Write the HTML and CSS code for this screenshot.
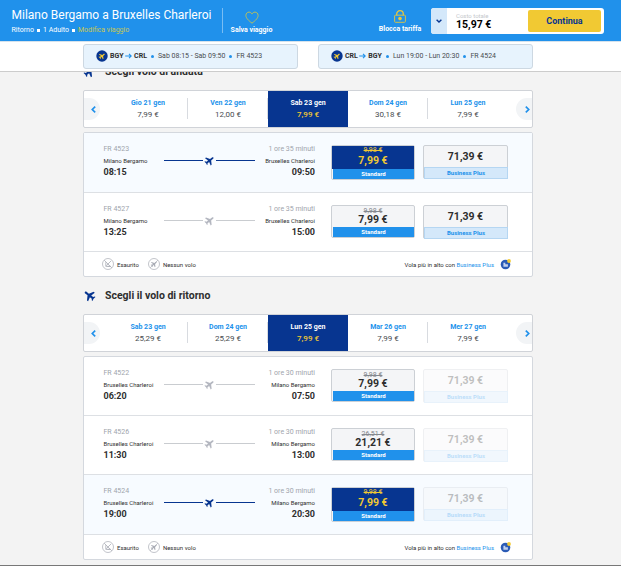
FILE: index.html
```
<!DOCTYPE html>
<html lang="it">
<head>
  <meta charset="UTF-8" />
  <meta name="viewport" content="width=device-width, initial-scale=1.0"/>
  <title>Milano Bergamo a Bruxelles Charleroi</title>
  <link rel="stylesheet" href="styles.css">
</head>
<body>
  <!-- icons -->
  <svg class="sprite" width="0" height="0">
    <symbol id="plane" viewBox="0 0 24 24">
      <path transform="rotate(52 12 12)" d="M22 16.5v-2.6L14 9V3.500c0-1.200-1-2.300-2-2.300s-2 1.100-2 2.300V9l-8 4.900v2.600l8-2V19l-2.500 1.700v1.800l4.500-1 4.500 1v-1.800L14 19v-4.500z"/>
    </symbol>
    <symbol id="soldout" viewBox="0 0 12 12">
      <circle cx="6" cy="6" r="5.500" fill="none" stroke="currentColor" stroke-width=".7"/>
      <path d="M2.200 2.200l7.600 7.600M9 3L4.300 7.700M3.800 4.200v4.200h4.800M5.500 8.400l3-.1" fill="none" stroke="currentColor" stroke-width=".8"/>
    </symbol>
    <symbol id="noflight" viewBox="0 0 12 12">
      <circle cx="6" cy="6" r="5.500" fill="none" stroke="currentColor" stroke-width=".7"/>
      <path d="M2.200 9.800l7.600-7.600" fill="none" stroke="currentColor" stroke-width=".7"/>
      <use href="#plane" x="2.300" y="2.300" width="7.400" height="7.400"/>
    </symbol>
    <symbol id="bizplus" viewBox="0 0 12 12">
      <circle cx="5.500" cy="6.500" r="4.800" fill="#2b5bb5"/>
      <path d="M3.400 4.700h1.900v1.600h2.600v2.400H3.400z" fill="#c3d2ee"/>
      <circle cx="9" cy="3" r="1.900" fill="#f1c933"/>
    </symbol>
    <symbol id="badge" viewBox="0 0 12 12">
      <circle cx="6" cy="6" r="5.700" fill="#073590"/>
      <use href="#plane" x="2.200" y="2.200" width="7.600" height="7.600" fill="#f1c933"/>
    </symbol>
    <symbol id="arrow" viewBox="0 0 7 6">
      <path d="M.2 3h6M4 .8L6.200 3 4 5.200" fill="none" stroke="#2091eb" stroke-width="1.100"/>
    </symbol>
    <symbol id="left" viewBox="0 0 5 7">
      <path d="M4.200 .7L1.300 3.500 4.200 6.300" fill="none" stroke="#2091eb" stroke-width="1.700"/>
    </symbol>
    <symbol id="right" viewBox="0 0 5 7">
      <path d="M.8 .7L3.700 3.500 .8 6.300" fill="none" stroke="#2091eb" stroke-width="1.700"/>
    </symbol>
  </svg>

  <header class="header">
    <div class="topbar">
      <div class="trip">
        <h1>Milano Bergamo a Bruxelles Charleroi</h1>
        <p>Ritorno<i class="sq"></i>1 Adulto<i class="sq"></i><a href="#">Modifica viaggio</a></p>
      </div>
      <a class="action save" href="#">
        <svg width="14" height="13" viewBox="0 0 14 13"><path d="M7 12.200C3.300 9.300 .9 7.100 .9 4.400 .9 2.500 2.300 1.100 4 1.100 5.300 1.100 6.400 1.900 7 3.100 7.600 1.900 8.700 1.100 10 1.100c1.700 0 3.100 1.400 3.100 3.300C13.100 7.100 10.700 9.300 7 12.200z" fill="none" stroke="#b9bf5c" stroke-width="1"/></svg>
        Salva viaggio
      </a>
      <a class="action lock" href="#">
        <svg width="14" height="13" viewBox="0 0 14 13"><path d="M3.700 5.300V4a3.300 3.300 0 0 1 6.600 0v1.300" fill="none" stroke="#e6c63e" stroke-width="1.300"/><rect x="1.600" y="5.200" width="10.800" height="7.100" rx=".8" fill="none" stroke="#d3c24b" stroke-width="1"/><circle cx="7" cy="8.600" r="1.800" fill="#f1c933"/></svg>
        Blocca tariffa
      </a>
      <div class="total">
        <span class="toggle"><svg width="6" height="4" viewBox="0 0 6 4"><path d="M.6 .7L3 3 5.400 .7" fill="none" stroke="#073590" stroke-width="1.400"/></svg></span>
        <div class="cost">
          <small>Costo totale</small>
          <strong>15,97 €</strong>
        </div>
        <button class="continue">Continua</button>
      </div>
    </div>
    <div class="summary">
      <div class="chip">
        <svg width="12" height="12"><use href="#badge"/></svg>
        <b>BGY</b><svg class="to" width="7" height="6"><use href="#arrow"/></svg><b>CRL</b>
        <i class="dot"></i><span>Sab 08:15 - Sab 09:50</span>
        <i class="dot"></i><span>FR 4523</span>
      </div>
      <div class="chip">
        <svg width="12" height="12"><use href="#badge"/></svg>
        <b>CRL</b><svg class="to" width="7" height="6"><use href="#arrow"/></svg><b>BGY</b>
        <i class="dot"></i><span>Lun 19:00 - Lun 20:30</span>
        <i class="dot"></i><span>FR 4524</span>
      </div>
    </div>
  </header>

  <main class="page">
    <h2 class="title"><svg width="13" height="13"><use href="#plane"/></svg>Scegli volo di andata</h2>
    <div class="dates">
      <button class="nav prev"><svg width="5" height="7"><use href="#left"/></svg></button>
      <div class="date"><b>Gio 21 gen</b><span>7,99 €</span></div>
      <div class="date"><b>Ven 22 gen</b><span>12,00 €</span></div>
      <div class="date active"><b>Sab 23 gen</b><span>7,99 €</span></div>
      <div class="date"><b>Dom 24 gen</b><span>30,18 €</span></div>
      <div class="date"><b>Lun 25 gen</b><span>7,99 €</span></div>
      <button class="nav next"><svg width="5" height="7"><use href="#right"/></svg></button>
    </div>
    <div class="flights">
      <div class="flight selected">
        <div class="from"><span class="info">FR 4523</span><span class="city">Milano Bergamo</span><span class="time">08:15</span></div>
        <div class="route"><svg width="11" height="11"><use href="#plane"/></svg></div>
        <div class="dest"><span class="info">1 ore 35 minuti</span><span class="city">Bruxelles Charleroi</span><span class="time">09:50</span></div>
        <div class="fare standard"><div class="price"><s>9,98 €</s><b>7,99 €</b></div><div class="type">Standard</div></div>
        <div class="fare business"><div class="price"><b>71,39 €</b></div><div class="type">Business Plus</div></div>
      </div>
      <div class="flight">
        <div class="from"><span class="info">FR 4527</span><span class="city">Milano Bergamo</span><span class="time">13:25</span></div>
        <div class="route"><svg width="11" height="11"><use href="#plane"/></svg></div>
        <div class="dest"><span class="info">1 ore 35 minuti</span><span class="city">Bruxelles Charleroi</span><span class="time">15:00</span></div>
        <div class="fare standard"><div class="price"><s>9,98 €</s><b>7,99 €</b></div><div class="type">Standard</div></div>
        <div class="fare business"><div class="price"><b>71,39 €</b></div><div class="type">Business Plus</div></div>
      </div>
      <div class="legend">
        <svg width="12" height="12"><use href="#soldout"/></svg><span>Esaurito</span>
        <svg width="12" height="12"><use href="#noflight"/></svg><span>Nessun volo</span>
        <p>Vola più in alto con <a href="#">Business Plus</a></p>
        <svg width="12" height="12"><use href="#bizplus"/></svg>
      </div>
    </div>

    <h2 class="title return"><svg width="13" height="13"><use href="#plane"/></svg>Scegli il volo di ritorno</h2>
    <div class="dates">
      <button class="nav prev"><svg width="5" height="7"><use href="#left"/></svg></button>
      <div class="date"><b>Sab 23 gen</b><span>25,29 €</span></div>
      <div class="date"><b>Dom 24 gen</b><span>25,29 €</span></div>
      <div class="date active"><b>Lun 25 gen</b><span>7,99 €</span></div>
      <div class="date"><b>Mar 26 gen</b><span>7,99 €</span></div>
      <div class="date"><b>Mer 27 gen</b><span>7,99 €</span></div>
      <button class="nav next"><svg width="5" height="7"><use href="#right"/></svg></button>
    </div>
    <div class="flights">
      <div class="flight">
        <div class="from"><span class="info">FR 4522</span><span class="city">Bruxelles Charleroi</span><span class="time">06:20</span></div>
        <div class="route"><svg width="11" height="11"><use href="#plane"/></svg></div>
        <div class="dest"><span class="info">1 ore 30 minuti</span><span class="city">Milano Bergamo</span><span class="time">07:50</span></div>
        <div class="fare standard"><div class="price"><s>9,98 €</s><b>7,99 €</b></div><div class="type">Standard</div></div>
        <div class="fare business disabled"><div class="price"><b>71,39 €</b></div><div class="type">Business Plus</div></div>
      </div>
      <div class="flight">
        <div class="from"><span class="info">FR 4526</span><span class="city">Bruxelles Charleroi</span><span class="time">11:30</span></div>
        <div class="route"><svg width="11" height="11"><use href="#plane"/></svg></div>
        <div class="dest"><span class="info">1 ore 30 minuti</span><span class="city">Milano Bergamo</span><span class="time">13:00</span></div>
        <div class="fare standard"><div class="price"><s>26,51 €</s><b>21,21 €</b></div><div class="type">Standard</div></div>
        <div class="fare business disabled"><div class="price"><b>71,39 €</b></div><div class="type">Business Plus</div></div>
      </div>
      <div class="flight selected">
        <div class="from"><span class="info">FR 4524</span><span class="city">Bruxelles Charleroi</span><span class="time">19:00</span></div>
        <div class="route"><svg width="11" height="11"><use href="#plane"/></svg></div>
        <div class="dest"><span class="info">1 ore 30 minuti</span><span class="city">Milano Bergamo</span><span class="time">20:30</span></div>
        <div class="fare standard"><div class="price"><s>9,98 €</s><b>7,99 €</b></div><div class="type">Standard</div></div>
        <div class="fare business disabled"><div class="price"><b>71,39 €</b></div><div class="type">Business Plus</div></div>
      </div>
      <div class="legend">
        <svg width="12" height="12"><use href="#soldout"/></svg><span>Esaurito</span>
        <svg width="12" height="12"><use href="#noflight"/></svg><span>Nessun volo</span>
        <p>Vola più in alto con <a href="#">Business Plus</a></p>
        <svg width="12" height="12"><use href="#bizplus"/></svg>
      </div>
    </div>
  </main>
</body>
</html>
```
FILE: styles.css
```
* {
  box-sizing: border-box;
}
body {
  margin: 0;
  height: 566px;
  font-family: Roboto, Arial, sans-serif;
  font-size: 7px;
  color: #2e2e2e;
  background: #f3f3f3;
  border-bottom: 1px solid #777;
  overflow: hidden;
}
h1, h2, p {
  margin: 0;
}
a {
  text-decoration: none;
}
svg {
  display: block;
  flex: none;
}
button {
  border: none;
  padding: 0;
  font-family: inherit;
}
.sprite {
  position: absolute;
}

/* header */
.header {
  position: fixed;
  top: 0;
  left: 0;
  width: 100%;
  z-index: 10;
}
.topbar {
  display: flex;
  height: 42px;
  background: #2091eb;
  border-bottom: 1px solid #d5e2ec;
  color: #fff;
}
.trip {
  width: 223px;
  height: 25px;
  margin-top: 8px;
  padding-left: 11.5px;
  border-right: 1px solid #79bdf3;
}
.trip h1 {
  font-size: 12px;
  line-height: 14px;
  font-weight: 400;
  white-space: nowrap;
}
.trip p {
  display: flex;
  align-items: center;
  line-height: 9px;
  margin-top: 4px;
}
.trip a {
  color: #c9c750;
}
.sq {
  width: 3px;
  height: 3px;
  margin: 0 3px;
  background: #fff;
}
.action {
  display: flex;
  flex-direction: column;
  align-items: center;
  font-weight: 700;
  line-height: 9px;
  color: #fff;
  white-space: nowrap;
}
.save {
  width: 43px;
  margin: 11px 0 0 7px;
}
.save svg {
  margin-bottom: 2px;
}
.lock {
  width: 44px;
  margin: 10px 0 0 105px;
}
.lock svg {
  margin-bottom: 2px;
}
.total {
  display: flex;
  width: 173px;
  height: 26px;
  margin: 8px 0 0 9px;
  background: #fff;
  border-radius: 3px;
  overflow: hidden;
}
.toggle {
  display: flex;
  align-items: center;
  justify-content: center;
  width: 16px;
  background: #d4e8fa;
}
.cost {
  width: 81px;
  padding: 4px 0 0 9px;
}
.cost small {
  display: block;
  font-size: 6px;
  line-height: 8px;
  color: #c5c8cc;
}
.cost strong {
  display: block;
  font-size: 10.5px;
  line-height: 9px;
  color: #000;
}
.continue {
  width: 73px;
  height: 22px;
  margin-top: 2px;
  border-radius: 2px;
  background: #f1c933;
  color: #073590;
  font-size: 9px;
  font-weight: 700;
}
.summary {
  display: flex;
  justify-content: center;
  gap: 20px;
  height: 30px;
  padding: 2px 5px 0 0;
  background: #fff;
  border-bottom: 1px solid #ccc;
}
.chip {
  display: flex;
  align-items: center;
  width: 215px;
  height: 25px;
  padding: 0 0 1px 12px;
  border: 1px solid #cdd8e2;
  border-radius: 3px;
  background: #e7f3fd;
  color: #484c50;
  white-space: nowrap;
}
.chip b {
  color: #2e2e2e;
}
.chip svg + b {
  margin-left: 2px;
}
.to {
  margin-left: 1.5px;
}
.dot {
  width: 3px;
  height: 3px;
  margin: 1px 4px 0;
  border-radius: 50%;
  background: #2091eb;
}

/* page */
.page {
  width: 450px;
  margin-left: 83px;
  padding-top: 53px;
}
.title {
  display: flex;
  align-items: center;
  gap: 9px;
  height: 37px;
  font-size: 10.5px;
  font-weight: 700;
}
.title svg {
  fill: #073590;
}
.return svg {
  transform: scaleX(-1);
}

/* dates */
.dates {
  display: flex;
  justify-content: space-between;
  height: 38px;
  border: 1px solid #d0d3d8;
  border-radius: 2px;
  background: #fff;
  overflow: hidden;
}
.date {
  display: flex;
  flex-direction: column;
  align-items: center;
  position: relative;
  width: 80px;
  padding-top: 7px;
}
.date b {
  line-height: 10px;
  color: #2091eb;
}
.date span {
  font-size: 8px;
  line-height: 10px;
  margin-top: 2px;
  color: #484c50;
}
.date:not(.active)::after {
  content: "";
  position: absolute;
  right: 0;
  top: 7px;
  width: 1px;
  height: 21px;
  background: #d8dbe0;
}
.date:nth-child(6)::after {
  display: none;
}
.date.active {
  background: #073590;
}
.date.active b {
  color: #fff;
}
.date.active span {
  color: #f1c933;
  font-weight: 500;
}
.nav {
  display: flex;
  align-items: center;
  width: 16px;
  height: 22px;
  margin-top: 7px;
  background: #f2f4f6;
}
.prev {
  margin-right: 8px;
  padding-left: 7px;
  border-radius: 0 11px 11px 0;
}
.next {
  margin-left: 8px;
  padding-left: 9px;
  border-radius: 11px 0 0 11px;
}

/* flights */
.flights {
  margin-top: 4px;
  border: 1px solid #d4d8de;
  border-radius: 2px;
  background: #fff;
}
.flight {
  display: flex;
  height: 59px;
  padding-left: 19px;
  border-bottom: 1px solid #dde0e4;
}
.flight.selected {
  height: 60px;
  background: #f7fbff;
}
.from, .dest {
  display: flex;
  flex-direction: column;
  width: 60px;
  padding-top: 11px;
  white-space: nowrap;
}
.from {
  padding-left: .5px;
}
.dest {
  align-items: flex-end;
}
.info {
  line-height: 11px;
  color: #a0a4ac;
}
.city {
  font-size: 6px;
  line-height: 11px;
}
.time {
  font-size: 9px;
  line-height: 10px;
  margin-top: 1px;
  font-weight: 700;
}
.route {
  display: flex;
  align-items: center;
  gap: 1px;
  width: 92px;
  height: 12px;
  margin-top: 21px;
  padding-left: 1px;
}
.route::before, .route::after {
  content: "";
  flex: 1;
  height: 1px;
  background: #c9ccd0;
}
.route svg {
  fill: #b4b7c0;
}
.selected .route::before, .selected .route::after {
  background: #073590;
}
.selected .route svg {
  fill: #073590;
}

/* fares */
.fare {
  display: flex;
  flex-direction: column;
  width: 84px;
  height: 33px;
  margin: 12px 0 0 16px;
  border: 1px solid #ccd0d5;
  border-radius: 2px;
  background: #f4f5f7;
  text-align: center;
}
.price {
  display: flex;
  flex-direction: column;
  flex: 1;
}
.price s {
  line-height: 8px;
  color: #85888e;
}
.price b {
  font-size: 10.5px;
  line-height: 10px;
}
.type {
  font-size: 6px;
  font-weight: 700;
  line-height: 10px;
}
.standard .price {
  padding-top: 1px;
}
.standard .type {
  margin-left: 1px;
  background: #2091eb;
  color: #fff;
}
.selected .standard {
  height: 35px;
}
.selected .standard .price {
  padding-top: 0;
  background: #073590;
}
.selected .standard .price s,
.selected .standard .price b {
  color: #f1c933;
}
.selected .standard .price b {
  margin-top: 2px;
}
.business {
  width: 85px;
  height: 34px;
  margin-left: 8px;
}
.business .price b {
  line-height: 21px;
}
.business .type {
  height: 12px;
  margin: 0 -1px -1px 0;
  border: 1px solid #b5d6f2;
  background: #d4e8fa;
  color: #2091eb;
}
.disabled {
  opacity: .3;
}

/* legend */
.legend {
  display: flex;
  align-items: center;
  height: 24px;
  padding: 0 20px 0 18px;
  font-size: 6px;
  color: #2e2e2e;
}
.legend svg {
  color: #a9acb5;
  fill: #a9acb5;
}
.legend span {
  margin: 0 9px 0 3px;
}
.legend p {
  margin: 0 6px 0 auto;
}
.legend a {
  color: #2091eb;
}
```
